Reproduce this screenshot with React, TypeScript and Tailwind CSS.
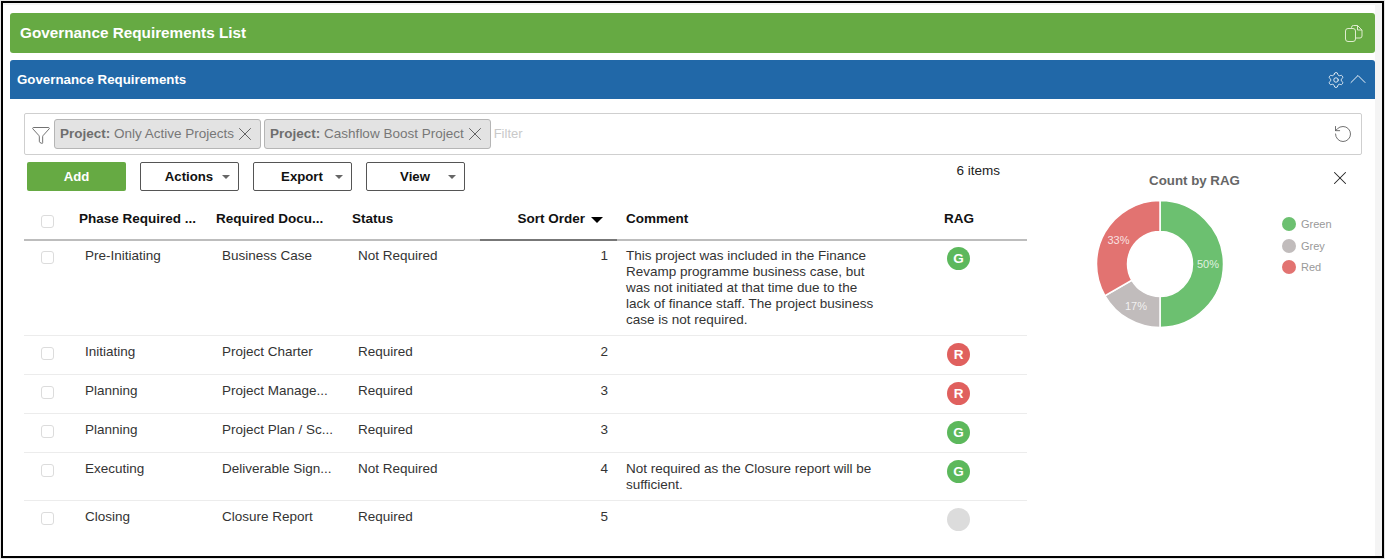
import { ChevronUp, Funnel, RotateCcw, Settings, X } from 'lucide-react'

const rows = [
  { phase: 'Pre-Initiating', doc: 'Business Case', status: 'Not Required', order: 1, rag: 'G', h: 'h-[96px]', comment: 'This project was included in the Finance Revamp programme business case, but was not initiated at that time due to the lack of finance staff. The project business case is not required.' },
  { phase: 'Initiating', doc: 'Project Charter', status: 'Required', order: 2, rag: 'R', h: 'h-[39px]', comment: '' },
  { phase: 'Planning', doc: 'Project Manage...', status: 'Required', order: 3, rag: 'R', h: 'h-[39px]', comment: '' },
  { phase: 'Planning', doc: 'Project Plan / Sc...', status: 'Required', order: 3, rag: 'G', h: 'h-[39px]', comment: '' },
  { phase: 'Executing', doc: 'Deliverable Sign...', status: 'Not Required', order: 4, rag: 'G', h: 'h-[48px]', comment: 'Not required as the Closure report will be sufficient.' },
  { phase: 'Closing', doc: 'Closure Report', status: 'Required', order: 5, rag: '', h: 'h-[39px]', comment: '' },
]

const cols = 'grid grid-cols-[49px_137px_136px_134px_137px_321px_89px]'

function Rag({ value }: { value: string }) {
  const color = value === 'G' ? 'bg-[#5cb85c]' : value === 'R' ? 'bg-[#e0605e]' : 'bg-[#dcdcdc]'
  return (
    <div className={`w-[23px] h-[23px] rounded-full flex items-center justify-center text-white text-[13.5px] font-bold ${color}`}>
      {value}
    </div>
  )
}

function Checkbox() {
  return <div className="w-[13px] h-[13px] rounded-[3px] border border-[#dcdcdc] bg-white" />
}

function ActionButton({ label }: { label: string }) {
  return (
    <button className="relative h-[29px] w-[99px] rounded-[2px] border border-[#555] bg-white text-[13.2px] font-bold text-[#111] flex items-center justify-center">
      <span className="-ml-[1px]">{label}</span>
      <span className="absolute right-[8px] top-[12px] w-0 h-0 border-x-[4px] border-x-transparent border-t-[4px] border-t-[#666]" />
    </button>
  )
}

function FilterChip({ label, value }: { label: string; value: string }) {
  return (
    <div className="h-[30px] flex items-center pl-[5px] pr-[4px] rounded-[3px] border border-[#b5b5b5] bg-[#e3e3e3] text-[13.5px] text-[#777] whitespace-nowrap">
      <span><b className="font-bold text-[#6e6e6e]">{label}</b> {value}</span>
      <X size={22} strokeWidth={1} className="text-[#555]" />
    </div>
  )
}

function CopyIcon() {
  return (
    <svg width="18" height="17" viewBox="0 0 18 17" fill="none" stroke="#dfeccf" strokeWidth="1">
      <path d="M6.5 3.5V2.5a2 2 0 0 1 2-2h4l4.5 4.5v6a2 2 0 0 1-2 2h-4" />
      <path d="M12.5 .5V5H17" />
      <rect x=".5" y="3.5" width="10" height="13" rx="2.5" />
    </svg>
  )
}

function Donut() {
  return (
    <svg width="130" height="130" viewBox="0 0 130 130" fontFamily="Liberation Sans, sans-serif" fontSize="11" fill="#fff">
      <g stroke="#fff" strokeWidth="1.5">
        <path fill="#6cc070" d="M65 1.5A63.5 63.5 0 0 1 65 128.5L65 97.5A32.5 32.5 0 0 0 65 32.5Z" />
        <path fill="#c1bcbc" d="M65 128.5A63.5 63.5 0 0 1 10 96.75L36.85 81.25A32.5 32.5 0 0 0 65 97.5Z" />
        <path fill="#e27371" d="M10 96.75A63.5 63.5 0 0 1 65 1.5L65 32.5A32.5 32.5 0 0 0 36.85 81.25Z" />
      </g>
      <text x="113" y="69" textAnchor="middle" fillOpacity="0.8">50%</text>
      <text x="41" y="110.5" textAnchor="middle" fillOpacity="0.8">17%</text>
      <text x="23.5" y="45" textAnchor="middle" fillOpacity="0.8">33%</text>
    </svg>
  )
}

const legend = [
  { label: 'Green', color: 'bg-[#6cc070]' },
  { label: 'Grey', color: 'bg-[#c1bcbc]' },
  { label: 'Red', color: 'bg-[#e27371]' },
]

export default function App() {
  return (
    <div className="w-[1385px] h-[559px] bg-[#e6e6e6] pt-[1px] pl-[1px] overflow-hidden font-['Liberation_Sans',sans-serif] text-[13.5px] text-[#333]">
      <div className="w-[1383px] h-[557px] border-2 border-black bg-[#f4f4f4] pt-[2px]">
        <div className="h-full w-[1372px] bg-white pt-[8px] pl-[7px]">
          {/* Page title */}
          <div className="h-[40px] rounded-[3px] bg-[#66aa43] pl-[10px] pr-[12px] flex items-center justify-between text-white">
            <span className="text-[15.3px] font-bold">Governance Requirements List</span>
            <CopyIcon />
          </div>

          {/* Section header */}
          <div className="mt-[7px] h-[39px] rounded-t-[3px] bg-[#2168a8] pl-[7px] pr-[3px] flex items-center justify-between text-white">
            <span className="text-[13.3px] font-bold pt-[1px]">Governance Requirements</span>
            <div className="flex items-center">
              <Settings size={18} strokeWidth={1.1} className="mt-[1px]" />
              <ChevronUp size={28} strokeWidth={0.8} className="-ml-[1px] -mt-[1px]" />
            </div>
          </div>

          <div className="pl-[14px] pr-[13px] pt-[14px]">
            {/* Filter bar */}
            <div className="h-[42px] rounded-[2px] border border-[#cfcfcf] pl-[6px] pr-[8px] flex items-center">
              <Funnel size={20} strokeWidth={1} className="text-[#555] mr-[3px] mt-[1px]" />
              <div className="flex items-center gap-[3px]">
                <FilterChip label="Project:" value="Only Active Projects" />
                <FilterChip label="Project:" value="Cashflow Boost Project" />
              </div>
              <span className="ml-[3px] flex-1 text-[13px] text-[#c9c9c9]">Filter</span>
              <RotateCcw size={20} strokeWidth={1} className="text-[#555]" />
            </div>

            <div className="flex">
              {/* Table side */}
              <div className="w-[1003px] shrink-0">
                <div className="pt-[7px] pl-[3px] flex items-start h-[36px]">
                  <button className="w-[99px] h-[29px] rounded-[2px] bg-[#66aa43] text-white text-[13.2px] font-bold">Add</button>
                  <div className="ml-[14px] flex gap-[14px]">
                    <ActionButton label="Actions" />
                    <ActionButton label="Export" />
                    <ActionButton label="View" />
                  </div>
                  <span className="ml-auto mr-[27px] -mt-[1px] text-[#222]">6 items</span>
                </div>

                <div className={`${cols} h-[50px] pt-[9px] border-b-2 border-[#bdbdbd] items-center font-bold text-[#111] whitespace-nowrap`}>
                  <div className="pl-[17px] pt-[4px]"><Checkbox /></div>
                  <div className="pl-[6px]">Phase Required ...</div>
                  <div className="pl-[6px]">Required Docu...</div>
                  <div className="pl-[6px]">Status</div>
                  <div className="self-end h-[41px] -mb-[2px] border-b-2 border-[#777] flex items-center justify-end pr-[14px] gap-[6px]">
                    <span>Sort Order</span>
                    <span className="w-0 h-0 border-x-[6px] border-x-transparent border-t-[6px] border-t-black" />
                  </div>
                  <div className="pl-[9px]">Comment</div>
                  <div className="pl-[6px]">RAG</div>
                </div>

                <div className="-mt-[1px]">
                  {rows.map((row, i) => (
                    <div key={i} className={`${cols} ${row.h} ${i < rows.length - 1 ? 'border-b' : ''} border-[#ececec] leading-[16px] text-[#333]`}>
                      <div className="pl-[17px] pt-[11px]"><Checkbox /></div>
                      <div className="pl-[12px] pt-[8px]">{row.phase}</div>
                      <div className="pl-[12px] pt-[8px] whitespace-nowrap">{row.doc}</div>
                      <div className="pl-[12px] pt-[8px]">{row.status}</div>
                      <div className="pr-[9px] pt-[8px] text-right">{row.order}</div>
                      <div className="pl-[9px] pr-[58px] pt-[8px]">{row.comment}</div>
                      <div className="pl-[9px] pt-[7px]"><Rag value={row.rag} /></div>
                    </div>
                  ))}
                </div>
              </div>

              {/* Chart panel */}
              <div className="flex-1 relative">
                <X size={22} strokeWidth={1.1} className="absolute top-[12px] right-[11px] text-[#222]" />
                <div className="pt-[16px] text-center">
                  <span className="text-[13.3px] font-bold text-[#666]">Count by RAG</span>
                </div>
                <div className="flex items-start pl-[68px] pt-[8px]">
                  <Donut />
                  <div className="ml-[57px] pt-[17px] flex flex-col gap-[5.5px]">
                    {legend.map(item => (
                      <div key={item.label} className="h-[16px] flex items-center gap-[5px] text-[11px] text-[#999]">
                        <span className={`w-[14px] h-[14px] rounded-full shrink-0 ${item.color}`} />
                        {item.label}
                      </div>
                    ))}
                  </div>
                </div>
              </div>
            </div>
          </div>
        </div>
      </div>
    </div>
  )
}
